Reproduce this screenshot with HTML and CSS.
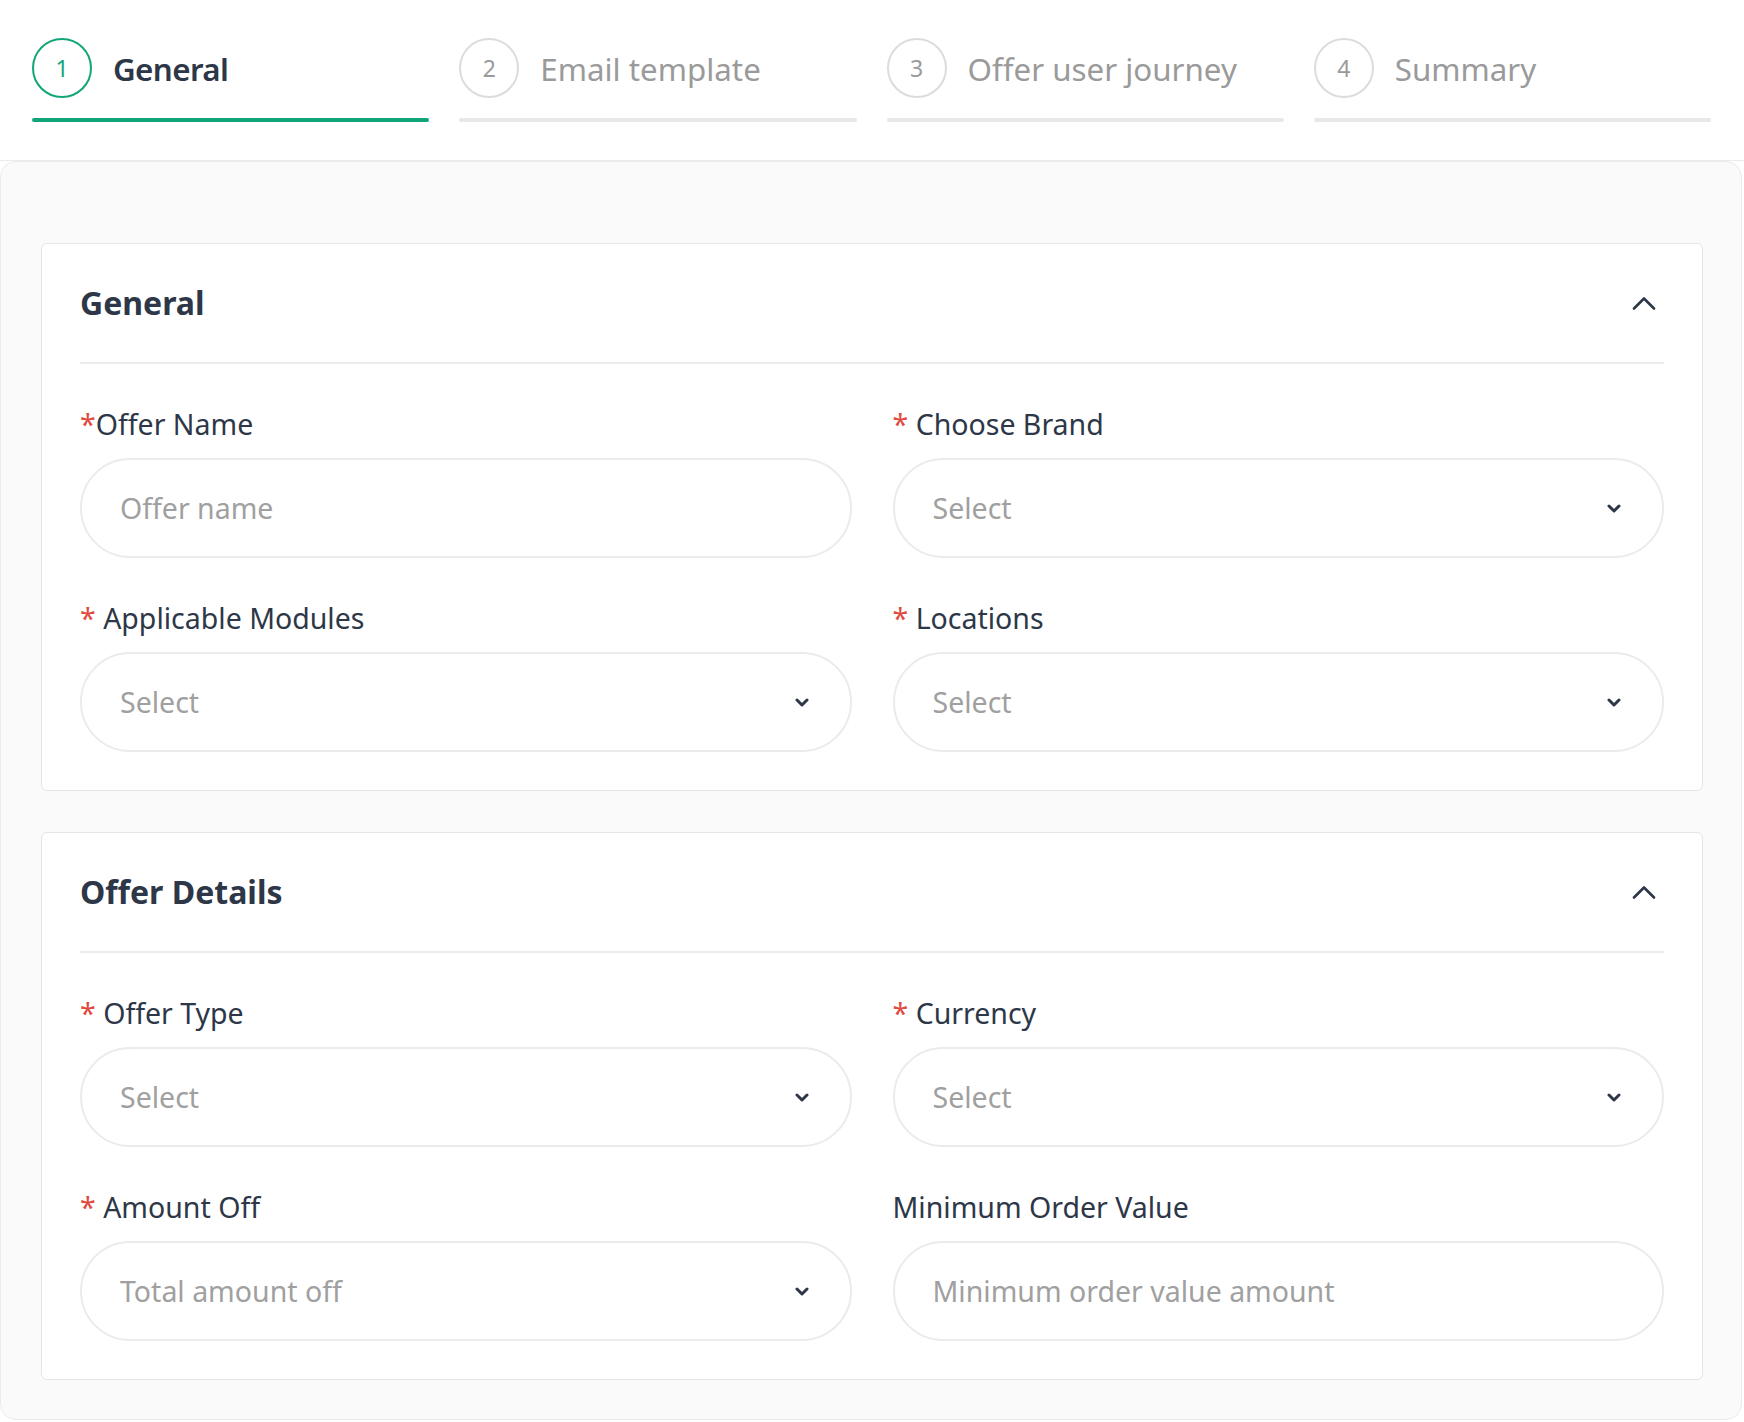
FILE: index.html
```html
<!DOCTYPE html>
<html lang="en">
<head>
    <meta charset="UTF-8">
    <meta name="viewport" content="width=device-width, initial-scale=1.0">
    <title>Create Offer</title>
    <link rel="stylesheet" href="styles.css">
</head>
<body>
    <div class="stepper">
        <div class="step active">
            <div class="step-head">
                <span class="step-num">1</span>
                <span class="step-label">General</span>
            </div>
            <div class="step-bar"></div>
        </div>
        <div class="step">
            <div class="step-head">
                <span class="step-num">2</span>
                <span class="step-label">Email template</span>
            </div>
            <div class="step-bar"></div>
        </div>
        <div class="step">
            <div class="step-head">
                <span class="step-num">3</span>
                <span class="step-label">Offer user journey</span>
            </div>
            <div class="step-bar"></div>
        </div>
        <div class="step">
            <div class="step-head">
                <span class="step-num">4</span>
                <span class="step-label">Summary</span>
            </div>
            <div class="step-bar"></div>
        </div>
    </div>

    <div class="content">
        <div class="card">
            <div class="card-header">
                <h2>General</h2>
                <svg class="collapse" width="24" height="14" viewBox="0 0 24 14"><path d="M2 12.5 L12 2.5 L22 12.5" fill="none" stroke="#2d3748" stroke-width="2.6" stroke-linecap="round" stroke-linejoin="round"/></svg>
            </div>
            <div class="card-body">
                <div class="field">
                    <label><span class="req">*</span>Offer Name</label>
                    <input class="control" type="text" placeholder="Offer name">
                </div>
                <div class="field">
                    <label><span class="req">*</span> Choose Brand</label>
                    <div class="control select">
                        <span>Select</span>
                        <svg width="14" height="9" viewBox="0 0 14 9"><path d="M2 2 L7 7 L12 2" fill="none" stroke="#2d3748" stroke-width="3" stroke-linecap="round" stroke-linejoin="round"/></svg>
                    </div>
                </div>
                <div class="field">
                    <label><span class="req">*</span> Applicable Modules</label>
                    <div class="control select">
                        <span>Select</span>
                        <svg width="14" height="9" viewBox="0 0 14 9"><path d="M2 2 L7 7 L12 2" fill="none" stroke="#2d3748" stroke-width="3" stroke-linecap="round" stroke-linejoin="round"/></svg>
                    </div>
                </div>
                <div class="field">
                    <label><span class="req">*</span> Locations</label>
                    <div class="control select">
                        <span>Select</span>
                        <svg width="14" height="9" viewBox="0 0 14 9"><path d="M2 2 L7 7 L12 2" fill="none" stroke="#2d3748" stroke-width="3" stroke-linecap="round" stroke-linejoin="round"/></svg>
                    </div>
                </div>
            </div>
        </div>

        <div class="card">
            <div class="card-header">
                <h2>Offer Details</h2>
                <svg class="collapse" width="24" height="14" viewBox="0 0 24 14"><path d="M2 12.5 L12 2.5 L22 12.5" fill="none" stroke="#2d3748" stroke-width="2.6" stroke-linecap="round" stroke-linejoin="round"/></svg>
            </div>
            <div class="card-body">
                <div class="field">
                    <label><span class="req">*</span> Offer Type</label>
                    <div class="control select">
                        <span>Select</span>
                        <svg width="14" height="9" viewBox="0 0 14 9"><path d="M2 2 L7 7 L12 2" fill="none" stroke="#2d3748" stroke-width="3" stroke-linecap="round" stroke-linejoin="round"/></svg>
                    </div>
                </div>
                <div class="field">
                    <label><span class="req">*</span> Currency</label>
                    <div class="control select">
                        <span>Select</span>
                        <svg width="14" height="9" viewBox="0 0 14 9"><path d="M2 2 L7 7 L12 2" fill="none" stroke="#2d3748" stroke-width="3" stroke-linecap="round" stroke-linejoin="round"/></svg>
                    </div>
                </div>
                <div class="field">
                    <label><span class="req">*</span> Amount Off</label>
                    <div class="control select">
                        <span>Total amount off</span>
                        <svg width="14" height="9" viewBox="0 0 14 9"><path d="M2 2 L7 7 L12 2" fill="none" stroke="#2d3748" stroke-width="3" stroke-linecap="round" stroke-linejoin="round"/></svg>
                    </div>
                </div>
                <div class="field">
                    <label>Minimum Order Value</label>
                    <input class="control" type="text" placeholder="Minimum order value amount">
                </div>
            </div>
        </div>
    </div>
</body>
</html>
```

FILE: styles.css
```css
body {
    margin: 0;
    background: #fff;
    font-family: 'Noto Sans', 'Open Sans', sans-serif;
    color: #2d3748;
}

.stepper {
    display: flex;
    gap: 30px;
    padding: 38px 33px 38px 32px;
    border-bottom: 1px solid #ebebeb;
}

.step {
    flex: 1;
}

.step-head {
    display: flex;
    align-items: center;
    gap: 21px;
    height: 60px;
}

.step-num {
    width: 56px;
    height: 56px;
    border: 2px solid #dcdcdc;
    border-radius: 50%;
    display: flex;
    align-items: center;
    justify-content: center;
    font-size: 23px;
    color: #9a9a9a;
    flex-shrink: 0;
}

.step-label {
    font-size: 31.3px;
    color: #9a9a9a;
    padding-top: 1px;
}

.step-bar {
    height: 4px;
    margin-top: 20px;
    border-radius: 2px;
    background: #e8e8e8;
}

.step.active .step-num {
    border-color: #13a57a;
    color: #13a57a;
}

.step.active .step-label {
    color: #2d3748;
    font-weight: 600;
    letter-spacing: -0.6px;
}

.step.active .step-bar {
    background: #13a57a;
}

.content {
    margin-right: 2px;
    padding: 81px 38px 39px 40px;
    background: #fafafa;
    border: 1px solid #ebebeb;
    border-radius: 16px;
}

.card {
    background: #fff;
    border: 1px solid #e6e6e6;
    border-radius: 6px;
    padding: 0 38px;
}

.card + .card {
    margin-top: 41px;
}

.card-header {
    display: flex;
    align-items: center;
    justify-content: space-between;
    padding: 39px 0;
    border-bottom: 2px solid #ebebeb;
}

.card-header h2 {
    margin: 0;
    font-size: 32px;
    line-height: 40px;
    font-weight: 700;
}

.collapse {
    margin-right: 8px;
}

.card-body {
    display: grid;
    grid-template-columns: 1fr 1fr;
    column-gap: 41px;
    row-gap: 40px;
    padding: 40px 0 38px;
}

.field label {
    display: block;
    font-size: 28.5px;
    line-height: 40px;
    margin-bottom: 14px;
}

.req {
    color: #e04a3f;
}

.control {
    box-sizing: border-box;
    width: 100%;
    height: 100px;
    border: 2px solid #ebebeb;
    border-radius: 50px;
    padding: 0 38px;
    font-family: inherit;
    font-size: 28.5px;
    color: #a0a0a0;
    background: #fff;
    outline: none;
}

.control::placeholder {
    color: #a0a0a0;
}

.select {
    display: flex;
    align-items: center;
    justify-content: space-between;
    padding-right: 41px;
}
```
